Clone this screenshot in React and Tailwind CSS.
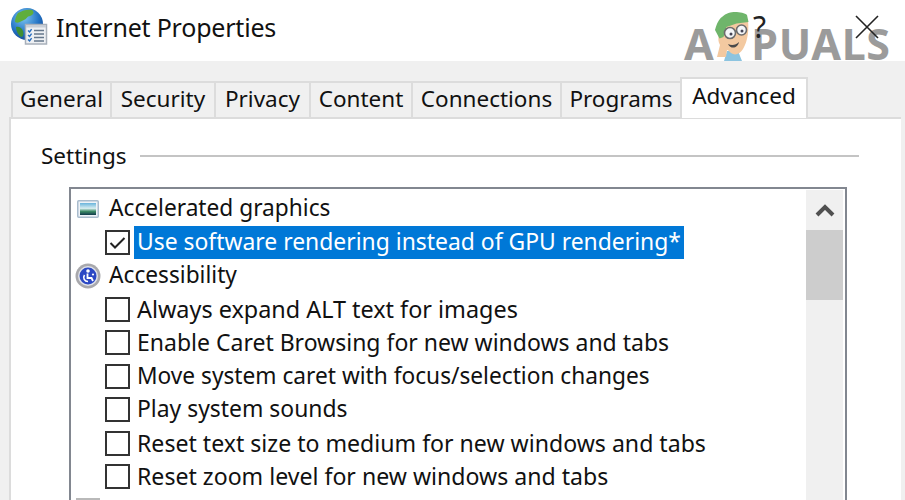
import React from 'react';

const font = "font-['Noto_Sans','Open_Sans',sans-serif]";

const tabs = [
  { label: 'General', w: 'w-[99px]' },
  { label: 'Security', w: 'w-[104px]' },
  { label: 'Privacy', w: 'w-[95px]' },
  { label: 'Content', w: 'w-[102px]' },
  { label: 'Connections', w: 'w-[149px]' },
  { label: 'Programs', w: 'w-[120px]' },
];

// sizes differ per row a bit, Segoe's widths don't scale evenly onto Noto
const options = [
  { label: 'Always expand ALT text for images', size: 'text-[23.4px]' },
  { label: 'Enable Caret Browsing for new windows and tabs', size: 'text-[23px]' },
  { label: 'Move system caret with focus/selection changes', size: 'text-[22.7px]' },
  { label: 'Play system sounds', size: 'text-[22.9px]' },
  { label: 'Reset text size to medium for new windows and tabs', size: 'text-[23.1px]' },
  { label: 'Reset zoom level for new windows and tabs', size: 'text-[23.1px]' },
];

const GlobeIcon = () => (
  <svg width="40" height="44" viewBox="0 0 40 44" className="shrink-0">
    <defs>
      <radialGradient id="globe" cx="0.4" cy="0.3" r="0.8">
        <stop offset="0" stopColor="#7cc4f0" />
        <stop offset="0.6" stopColor="#2272c4" />
        <stop offset="1" stopColor="#123f86" />
      </radialGradient>
    </defs>
    <circle cx="17" cy="17" r="16" fill="url(#globe)" />
    <path d="M8 6c5-3 10-4 14-3 3 2 1 5-2 6-3 0-3 3-6 4-3 1-5 4-9 2 0-3 1-6 3-9z" fill="#5fae3c" />
    <path d="M6 20c3-1 6 1 7 4 1 3 0 6-2 6-3-2-5-6-5-10z" fill="#3f8f33" />
    <rect x="15.5" y="17.5" width="21" height="19.5" fill="#eef0f3" stroke="#a8b0ba" strokeWidth="1.5" />
    <rect x="16" y="18" width="20" height="2.5" fill="#c8ced6" />
    <path d="M24 23.5h10M24 27h10M24 30.5h10M24 34h10" stroke="#66778c" strokeWidth="1.4" />
    <path d="M18 23.5l1.6 1.4 2-2.8M18 28l1.6 1.4 2-2.8M18 32.5l1.6 1.4 2-2.8" stroke="#2a6fc0" strokeWidth="1.4" fill="none" />
  </svg>
);

const PictureIcon = () => (
  <svg width="22" height="20" viewBox="0 0 22 20" className="shrink-0">
    <defs>
      <linearGradient id="pic" x1="0" y1="0" x2="0" y2="1">
        <stop offset="0" stopColor="#6ab4dc" />
        <stop offset="0.45" stopColor="#d8eef0" />
        <stop offset="0.7" stopColor="#3c8a66" />
        <stop offset="1" stopColor="#123a4c" />
      </linearGradient>
    </defs>
    <rect x="0.75" y="1.75" width="20.5" height="16.5" rx="1" fill="#eef3f8" stroke="#a9bccd" strokeWidth="1.5" />
    <rect x="3" y="4" width="16" height="12" fill="url(#pic)" />
  </svg>
);

const AccessIcon = () => (
  <svg width="26" height="26" viewBox="0 0 26 26" className="shrink-0">
    <circle cx="13" cy="13" r="12.5" fill="#a8a8ac" />
    <circle cx="13" cy="13" r="10" fill="#dfe2ea" />
    <circle cx="13" cy="13" r="8.5" fill="#2b48c4" />
    <circle cx="13" cy="8" r="1.8" fill="#fff" />
    <path d="M12.5 10.5v4.5h4l1.5 3" stroke="#fff" strokeWidth="1.8" fill="none" />
    <path d="M9.5 12c-2 3 0 6.5 3.5 6.5" stroke="#fff" strokeWidth="1.6" fill="none" />
    <circle cx="18" cy="11.5" r="1.1" fill="#fff" />
  </svg>
);

const Checkbox = ({ checked }) => (
  <span className="flex h-[25px] w-[25px] shrink-0 items-center justify-center border-2 border-[#333] bg-white">
    {checked && (
      <svg width="17" height="13" viewBox="0 0 17 13">
        <path d="M1.5 7l4.5 4.5L15.5 2" stroke="#222" strokeWidth="2" fill="none" />
      </svg>
    )}
  </span>
);

const Group = ({ icon, label }) => (
  <div className="flex h-[33.5px] items-center text-[22.7px]">
    <span className="mr-[4px] flex w-[34px] justify-center">{icon}</span>
    <span className="text-[#111]">{label}</span>
  </div>
);

const Option = ({ label, checked, selected, size }) => (
  <div className={`flex h-[33.5px] items-center pl-[34px] ${size}`}>
    <Checkbox checked={checked} />
    {selected ? (
      <span className="ml-[4px] flex h-[33px] items-center bg-[#0078d7] px-[3px] text-white">{label}</span>
    ) : (
      <span className="ml-[7px] text-[#111]">{label}</span>
    )}
  </div>
);

const App = () => {
  return (
    <div className={`relative h-[500px] w-[905px] overflow-hidden bg-white text-[22.5px] leading-none ${font}`}>
      {/* title bar */}
      <div className="flex h-[61px] items-start pl-[10px] pt-[7px]">
        <GlobeIcon />
        <span className="ml-[6px] mt-[8px] text-[25px] tracking-[-0.2px] text-[#111]">Internet Properties</span>
      </div>

      {/* watermark + window buttons */}
      <div className="absolute left-[684px] top-[25px] flex h-[36px] items-center text-[43px] font-bold leading-none tracking-[0.6px] text-[#9b9b9b]">
        <span>A</span>
        <span className="w-[37px]" />
        <span>PUALS</span>
      </div>
      <svg width="38" height="50" viewBox="0 0 38 50" className="absolute left-[712px] top-[11px]">
        <path d="M12 50l3-10h11l4 10z" fill="#8cc4e0" />
        <path d="M7 27L13 14 36 10c1 8 0 20-5 28-3 5-8 7-12 4-2-2-3-3-4-3l-1 7H5l3-12c-2-3-2-7-1-11z" fill="#f3c9a0" />
        <path d="M3 19C5 12 7 8 10 6 14 2 19 1 23 1c5 0 10 1 12 3l1.500 7-12 1.500-10 3.500-3 10-4 1.500z" fill="#6fb56b" />
        <circle cx="18" cy="22" r="5.500" fill="#f4f6f8" stroke="#6c6c6c" strokeWidth="1.600" />
        <circle cx="29.500" cy="19" r="5" fill="#f4f6f8" stroke="#6c6c6c" strokeWidth="1.600" />
        <path d="M23 21l2-1" stroke="#6c6c6c" strokeWidth="1.500" />
        <circle cx="19" cy="23" r="1.500" fill="#445" />
        <circle cx="30" cy="20" r="1.500" fill="#445" />
        <path d="M16 33c4 2 8 1 11-2-1 6-8 8-11 2z" fill="#4a4a4a" />
      </svg>
      <span className="absolute left-[753px] top-[12px] text-[30px] leading-none text-[#222]">?</span>
      <svg width="24" height="24" viewBox="0 0 24 24" className="absolute left-[855px] top-[15px]">
        <path d="M1 1l22 22M23 1L1 23" stroke="#222" strokeWidth="1.600" />
      </svg>

      {/* dialog body */}
      <div className="h-[439px] bg-[#f0f0f0] pl-[9px] pr-[4px]">
        <div className="flex h-[56px] items-end pl-[2px]">
          {tabs.map((t) => (
            <div
              key={t.label}
              className={`flex h-[36px] items-center justify-center border-l-2 border-t-2 border-[#dcdcdc] pb-[1px] text-[#111] ${t.w}`}
            >
              {t.label}
            </div>
          ))}
          <div className="relative z-10 -mb-[1px] flex h-[41px] w-[128px] items-center justify-center border-x-2 border-t-2 border-[#dcdcdc] bg-white pb-[5px] text-[#111]">
            Advanced
          </div>
        </div>

        <div className="h-[384px] border-l-2 border-t-2 border-[#dcdcdc] bg-white pl-[30px] pr-[42px]">
          <div className="flex h-[68px] items-center pt-[6px]">
            <span className="text-[#111]">Settings</span>
            <span className="ml-[13px] h-[2px] flex-1 bg-[#c4c4c4]" />
          </div>
          <div className="ml-[28px] flex h-[322px] w-[778px] border-2 border-[#828790] bg-white pt-[1px]">
            <div className="flex-1 pt-[2px]">
              <Group icon={<PictureIcon />} label="Accelerated graphics" />
              <Option checked selected size="text-[22.9px]" label="Use software rendering instead of GPU rendering*" />
              <Group icon={<AccessIcon />} label="Accessibility" />
              {options.map((o) => (
                <Option key={o.label} label={o.label} size={o.size} />
              ))}
              <div className="ml-[5px] mt-[4px] h-[6px] w-[24px] bg-[#b9b9b9]" />
            </div>
            <div className="mr-[2px] w-[37px] bg-[#f0f0f0]">
              <div className="flex h-[40px] items-center justify-center">
                <svg width="20" height="16" viewBox="0 0 20 16">
                  <path d="M2 13L10 5l8 8" stroke="#505050" strokeWidth="4" fill="none" />
                </svg>
              </div>
              <div className="h-[70px] bg-[#cdcdcd]" />
            </div>
          </div>
        </div>
      </div>
    </div>
  );
};

export default App;
